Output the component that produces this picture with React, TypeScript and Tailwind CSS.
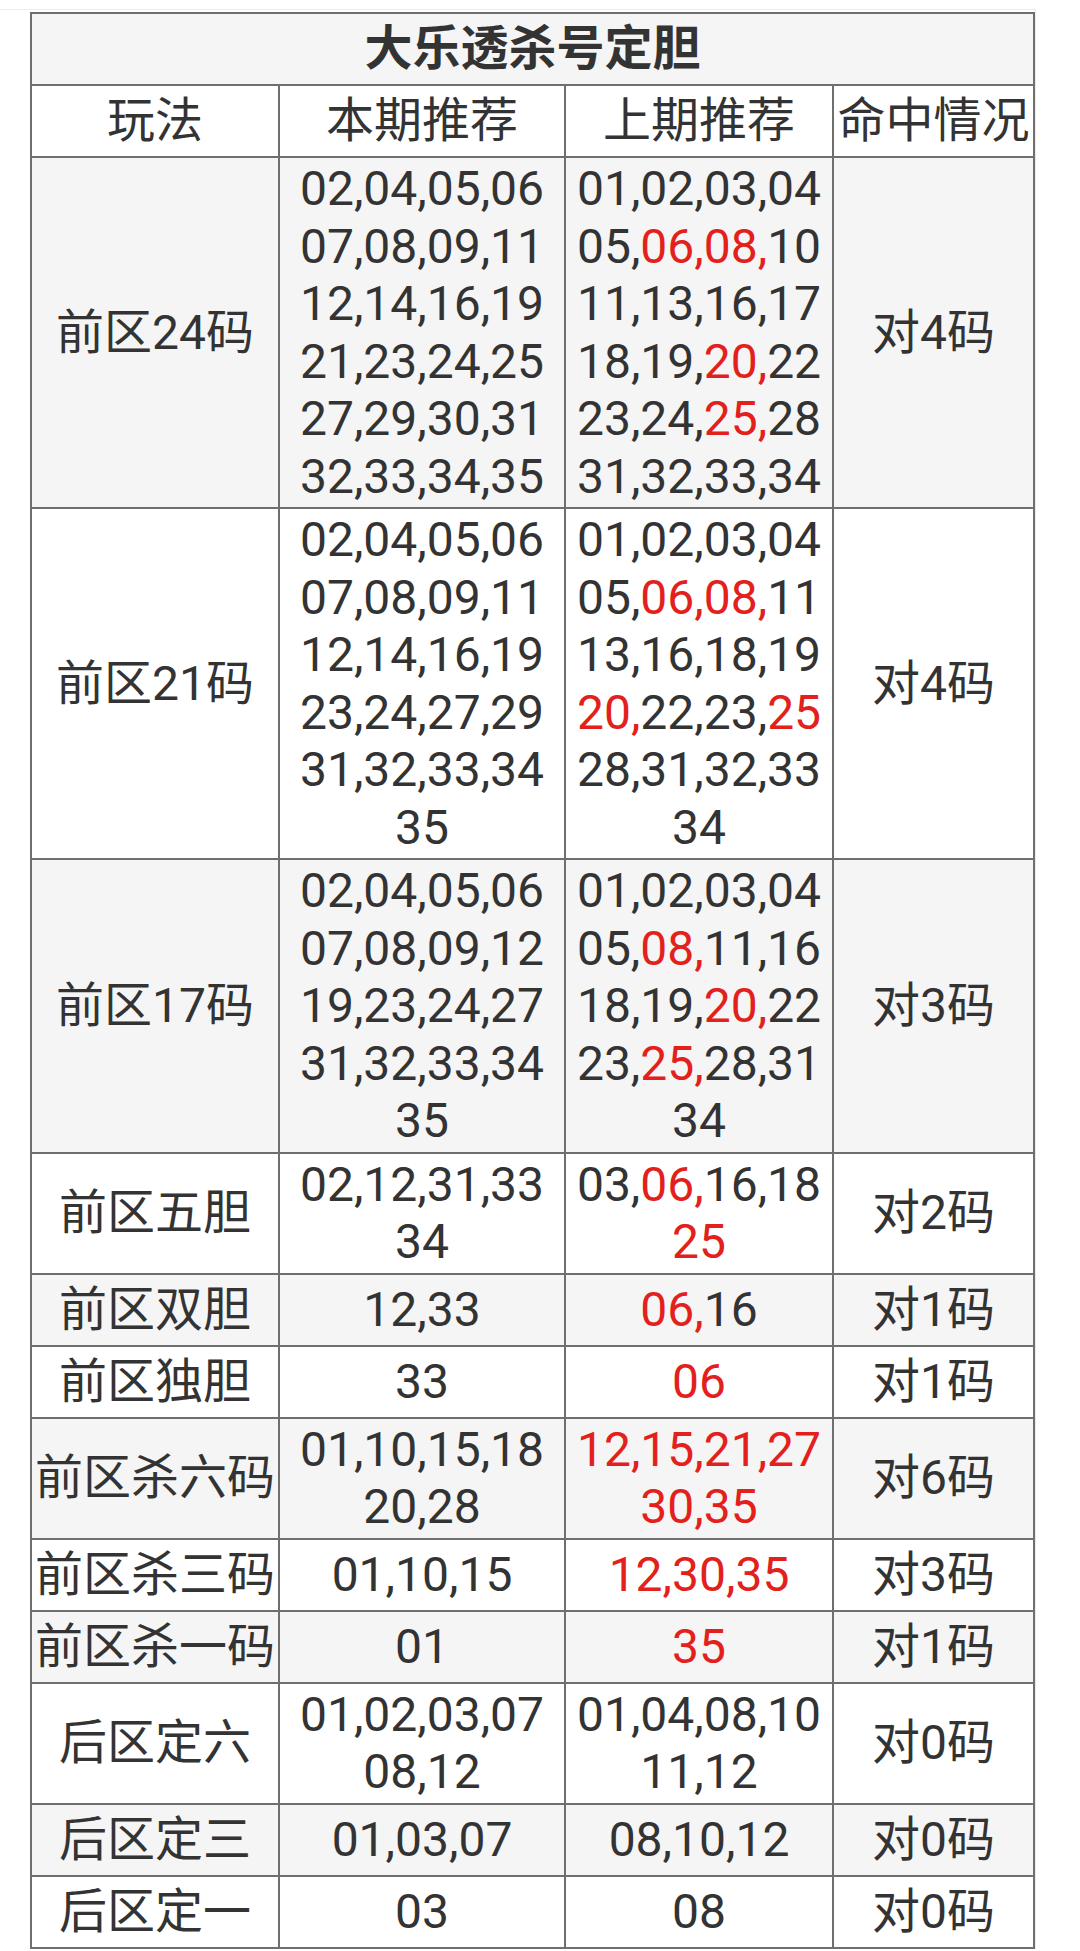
type Seg = [string, boolean?];
type Line = Seg[];

const n = (s: string): Line => [[s]];

const rows: { name: string; cur: Line[]; prev: Line[]; hit: string }[] = [
  {
    name: "前区24码",
    cur: ["02,04,05,06", "07,08,09,11", "12,14,16,19", "21,23,24,25", "27,29,30,31", "32,33,34,35"].map(n),
    prev: [
      n("01,02,03,04"),
      [["05,"], ["06,08,", true], ["10"]],
      n("11,13,16,17"),
      [["18,19,"], ["20,", true], ["22"]],
      [["23,24,"], ["25,", true], ["28"]],
      n("31,32,33,34"),
    ],
    hit: "对4码",
  },
  {
    name: "前区21码",
    cur: ["02,04,05,06", "07,08,09,11", "12,14,16,19", "23,24,27,29", "31,32,33,34", "35"].map(n),
    prev: [
      n("01,02,03,04"),
      [["05,"], ["06,08,", true], ["11"]],
      n("13,16,18,19"),
      [["20,", true], ["22,23,"], ["25", true]],
      n("28,31,32,33"),
      n("34"),
    ],
    hit: "对4码",
  },
  {
    name: "前区17码",
    cur: ["02,04,05,06", "07,08,09,12", "19,23,24,27", "31,32,33,34", "35"].map(n),
    prev: [
      n("01,02,03,04"),
      [["05,"], ["08,", true], ["11,16"]],
      [["18,19,"], ["20,", true], ["22"]],
      [["23,"], ["25,", true], ["28,31"]],
      n("34"),
    ],
    hit: "对3码",
  },
  {
    name: "前区五胆",
    cur: [n("02,12,31,33"), n("34")],
    prev: [[["03,"], ["06,", true], ["16,18"]], [["25", true]]],
    hit: "对2码",
  },
  { name: "前区双胆", cur: [n("12,33")], prev: [[["06,", true], ["16"]]], hit: "对1码" },
  { name: "前区独胆", cur: [n("33")], prev: [[["06", true]]], hit: "对1码" },
  {
    name: "前区杀六码",
    cur: [n("01,10,15,18"), n("20,28")],
    prev: [[["12,15,21,27", true]], [["30,35", true]]],
    hit: "对6码",
  },
  { name: "前区杀三码", cur: [n("01,10,15")], prev: [[["12,30,35", true]]], hit: "对3码" },
  { name: "前区杀一码", cur: [n("01")], prev: [[["35", true]]], hit: "对1码" },
  {
    name: "后区定六",
    cur: [n("01,02,03,07"), n("08,12")],
    prev: [n("01,04,08,10"), n("11,12")],
    hit: "对0码",
  },
  { name: "后区定三", cur: [n("01,03,07")], prev: [n("08,10,12")], hit: "对0码" },
  { name: "后区定一", cur: [n("03")], prev: [n("08")], hit: "对0码" },
];

function Lines({ lines }: { lines: Line[] }) {
  return (
    <>
      {lines.map((line, i) => (
        <div key={i} className="leading-[57.5px] whitespace-nowrap">
          {line.map(([t, red], j) => (
            <span key={j} className={red ? "text-[#e3211c]" : ""}>
              {t}
            </span>
          ))}
        </div>
      ))}
    </>
  );
}

const td = "border-2 border-[#6f6f6f] px-0 py-[2px] text-center align-middle";

export default function App() {
  return (
    <div
      className="min-h-[1951px] bg-white pt-[9px] text-[48px] text-[#333333]"
      style={{ fontFamily: "Roboto, 'Noto Sans CJK SC', sans-serif" }}
    >
      <div className="w-[1036px] border-t border-r border-[#ececec] pt-[2px] pl-[30px]">
        <table className="w-[1003px] table-fixed border-collapse">
          <colgroup>
            <col className="w-[248px]" />
            <col className="w-[286px]" />
            <col className="w-[268px]" />
            <col className="w-[201px]" />
          </colgroup>
          <tbody>
            <tr className="bg-[#f5f5f5]">
              <td colSpan={4} className={`${td} font-bold leading-[66px]`}>
                大乐透杀号定胆
              </td>
            </tr>
            <tr className="bg-white">
              <td className={`${td} leading-[66px]`}>玩法</td>
              <td className={`${td} leading-[66px]`}>本期推荐</td>
              <td className={`${td} leading-[66px]`}>上期推荐</td>
              <td className={`${td} leading-[66px]`}>命中情况</td>
            </tr>
            {rows.map((r, i) => (
              <tr key={r.name} className={i % 2 === 0 ? "bg-[#f5f5f5]" : "bg-white"}>
                <td className={`${td} leading-[66px] whitespace-nowrap`}>{r.name}</td>
                <td className={td}>
                  <Lines lines={r.cur} />
                </td>
                <td className={td}>
                  <Lines lines={r.prev} />
                </td>
                <td className={`${td} leading-[66px]`}>{r.hit}</td>
              </tr>
            ))}
          </tbody>
        </table>
      </div>
    </div>
  );
}
